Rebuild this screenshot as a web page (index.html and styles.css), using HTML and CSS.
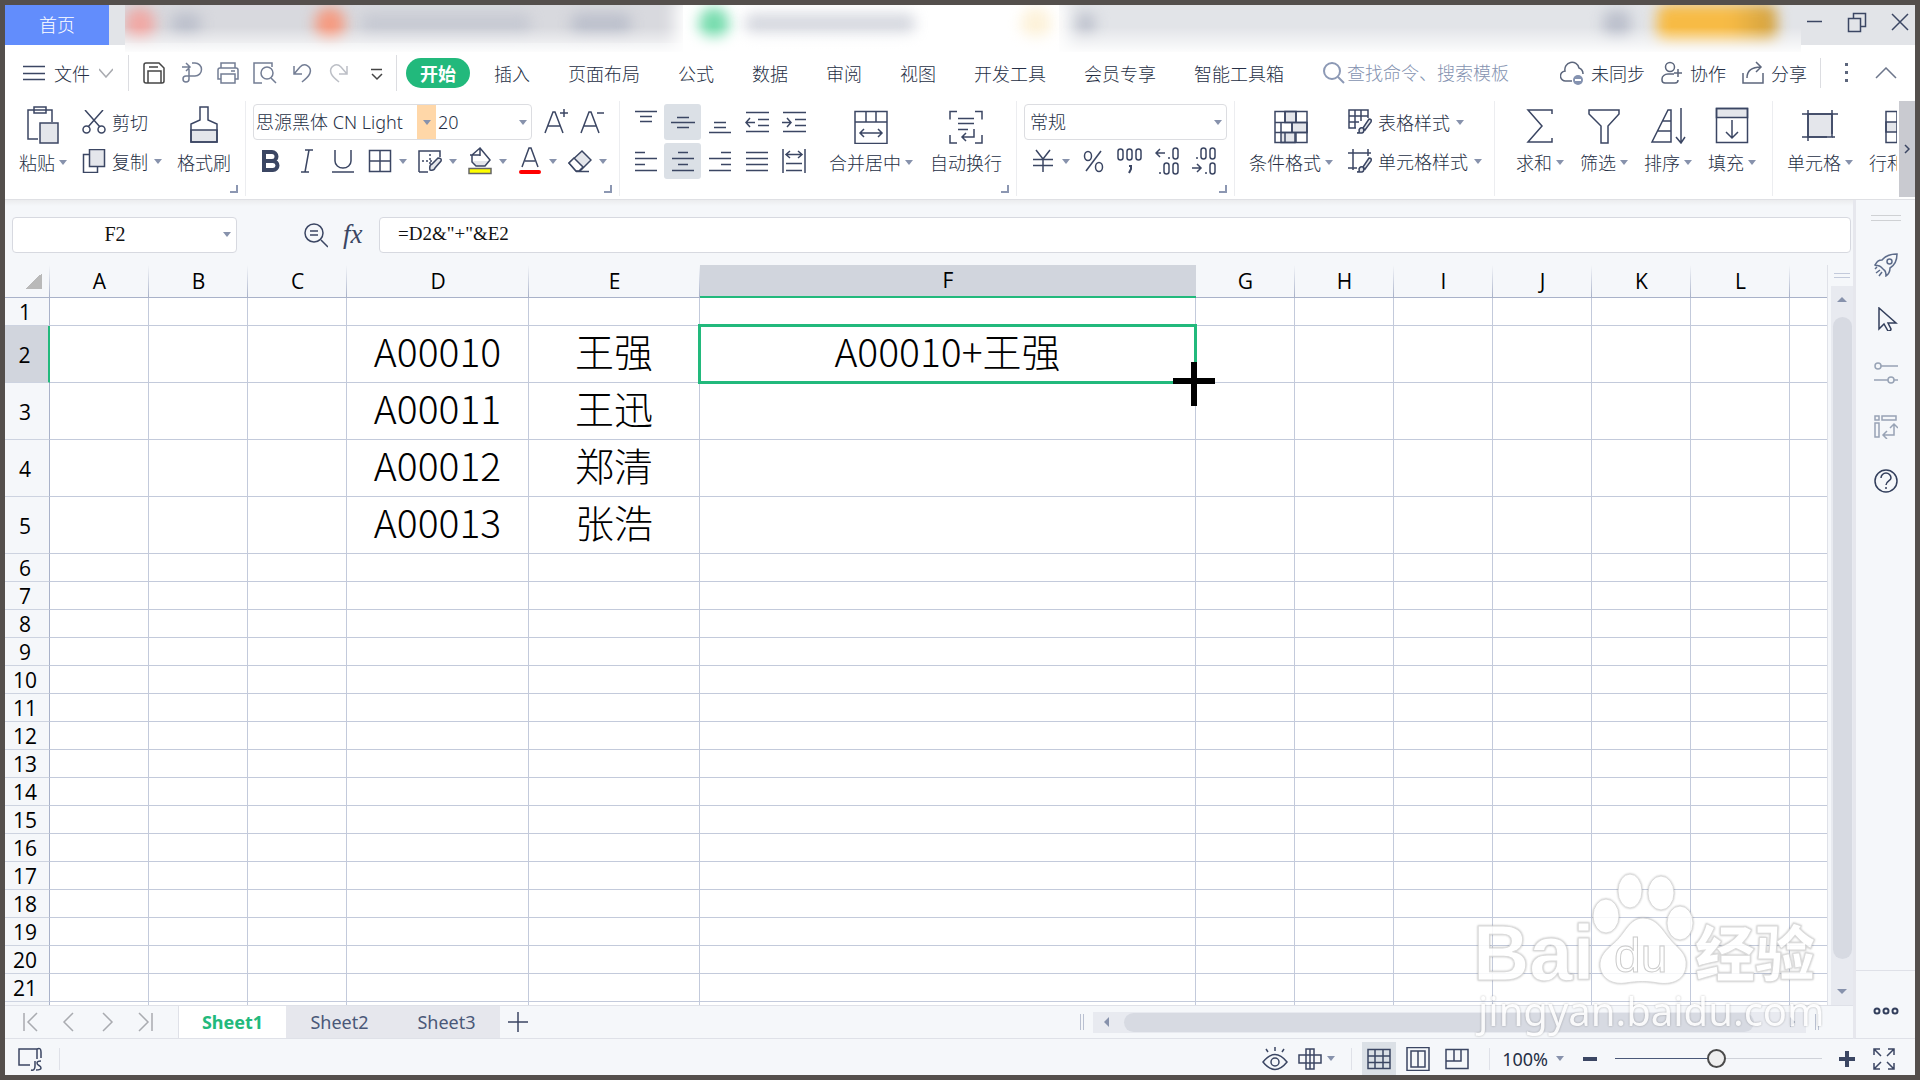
FILE: index.html
```
<!DOCTYPE html>
<html lang="zh-CN">
<head>
    <meta charset="UTF-8">
    <meta name="viewport" content="width=device-width, initial-scale=1.0">
    <title>表格</title>
    <link rel="stylesheet" href="styles.css">
</head>
<body>
    <div class="app">
        <header class="titlebar">
            <button class="home-tab" type="button">首页</button>
            <div class="doc-tabs">
                <div class="doc-tab tab-a"><i class="dot pink"></i><i class="bar short"></i></div>
                <div class="doc-tab tab-b"><i class="dot orange"></i><i class="bar long"></i><i class="bar mid"></i></div>
                <div class="doc-tab tab-c"><i class="dot green"></i><i class="bar long"></i><i class="dot yellow"></i></div>
                <div class="doc-tab tab-d"><i class="bar plus"></i></div>
                <div class="account"><i class="bar badge"></i><i class="pill"></i></div>
            </div>
            <div class="window-buttons">
                <button type="button" aria-label="最小化"><svg class="icon" width="20" height="24" viewBox="0 0 20 24"><path d="M3 11.500h15"/></svg></button>
                <button type="button" aria-label="还原"><svg class="icon" width="20" height="24" viewBox="0 0 20 24"><path d="M1.500 8.500h12v13h-12zM6.500 8.500v-5h12v13h-5"/></svg></button>
                <button type="button" aria-label="关闭"><svg class="icon" width="20" height="24" viewBox="0 0 20 24"><path d="M2 4l16 16M18 4L2 20"/></svg></button>
            </div>
        </header>

        <nav class="menubar">
            <button class="file-menu" type="button">
                <svg class="icon" width="22" height="24" viewBox="0 0 22 24"><path d="M0 5.500h22M0 12.500h22M0 18.500h22"/></svg>
                文件
                <svg class="icon light" width="14" height="10" viewBox="0 0 14 10"><path d="M0 1l7 8 7-8"/></svg>
            </button>
            <div class="quick">
                <button type="button" aria-label="保存"><svg class="icon dark" width="24" height="24" viewBox="0 0 24 24"><path d="M2 4a2 2 0 0 1 2-2h13l5 5v13a2 2 0 0 1-2 2H4a2 2 0 0 1-2-2zM6 22V10h13v12M7 6h9"/></svg></button>
                <button type="button" aria-label="输出"><svg class="icon soft" width="24" height="24" viewBox="0 0 24 24"><path d="M3 6h7M7 2l4 4-4 4M13 2h3a6 6 0 0 1 0 13H7a3 3 0 1 0 3 3V5"/></svg></button>
                <button type="button" aria-label="打印"><svg class="icon soft" width="24" height="24" viewBox="0 0 24 24"><path d="M5 7V2h14v5M5 18H2V9q0-2 2-2h16q2 0 2 2v9h-3M5 13h14v9H5zM15 10h4"/></svg></button>
                <button type="button" aria-label="打印预览"><svg class="icon soft" width="24" height="24" viewBox="0 0 24 24"><path d="M9 22H1V2h18v4M18 17l5 5"/><circle cx="14" cy="12" r="6"/></svg></button>
                <button type="button" aria-label="撤销"><svg class="icon soft" width="24" height="24" viewBox="0 0 24 24"><path d="M4 5v8h8M4 13l6-7c5-5 12 0 10 6-1 4-5 6-8 9"/></svg></button>
                <button type="button" aria-label="恢复"><svg class="icon faint" width="24" height="24" viewBox="0 0 24 24"><path d="M20 5v8h-8M20 13l-6-7C9 1 2 6 4 12c1 4 5 6 8 9"/></svg></button>
                <button type="button" aria-label="更多"><svg class="icon dark" width="24" height="24" viewBox="0 0 24 24"><path d="M7 8.500h11M8 13l5 5 5-5"/></svg></button>
            </div>
            <div class="menus">
                <button class="active" type="button">开始</button>
                <button type="button">插入</button>
                <button type="button">页面布局</button>
                <button type="button">公式</button>
                <button type="button">数据</button>
                <button type="button">审阅</button>
                <button type="button">视图</button>
                <button type="button">开发工具</button>
                <button type="button">会员专享</button>
                <button type="button">智能工具箱</button>
            </div>
            <label class="search">
                <svg class="icon" width="22" height="24" viewBox="0 0 22 24"><circle cx="9" cy="10" r="8"/><path d="M15 16l6 6"/></svg>
                <input type="text" placeholder="查找命令、搜索模板" aria-label="查找命令">
            </label>
            <div class="share">
                <button type="button"><svg class="icon" width="24" height="26" viewBox="0 0 24 26"><path d="M12 21H6a5 5 0 0 1-1-10 7 7 0 0 1 14-3c3 1 4 4 4 6"/><circle cx="18" cy="20" r="5" class="solid"/><path class="cut" d="M15 20h6"/></svg>未同步</button>
                <button type="button"><svg class="icon" width="22" height="24" viewBox="0 0 22 24"><circle cx="9" cy="6" r="4.500"/><path d="M13 13H7a6 5 0 0 0-6 5v1q0 3 3 3h10q3 0 3-3M17 8v8M13 12h8"/></svg>协作</button>
                <button type="button"><svg class="icon" width="22" height="24" viewBox="0 0 22 24"><path d="M1 12v10h20V12M5 17c0-8 5-11 14-11M14 1l5 5-5 5"/></svg>分享</button>
            </div>
            <button class="more" type="button" aria-label="更多选项"><svg class="icon" width="6" height="24" viewBox="0 0 6 24"><path class="fill" d="M1 2h3v3H1zM1 10h3v3H1zM1 18h3v3H1z"/></svg></button>
            <button class="collapse" type="button" aria-label="收起功能区"><svg class="icon" width="22" height="12" viewBox="0 0 22 12"><path d="M1 11L11 1l10 10"/></svg></button>
        </nav>

        <section class="ribbon">
            <div class="groups">
                <div class="group clipboard">
                    <button class="big" type="button"><svg class="icon" width="34" height="40" viewBox="0 0 34 40"><path d="M12 35H2V6h24v12M8 3h12v6H8z"/><path class="tint" d="M14 19h18v20H14z"/></svg><span>粘贴<i class="caret"></i></span></button>
                    <div class="rows">
                        <button class="small" type="button"><svg class="icon" width="24" height="24" viewBox="0 0 24 24"><path d="M3 0l15 17M21 0L6 17"/><circle cx="4.500" cy="19.500" r="3.500"/><circle cx="19.500" cy="19.500" r="3.500"/></svg>剪切</button>
                        <button class="small" type="button"><svg class="icon" width="24" height="24" viewBox="0 0 24 24"><path class="tint" d="M7.500.5h15v17h-15z"/><path d="M7 5.500H1.500v18h14V18"/></svg>复制<i class="caret"></i></button>
                    </div>
                    <button class="big" type="button"><svg class="icon" width="30" height="40" viewBox="0 0 30 40"><path class="tint" d="M2 26h26v12H2z"/><path d="M2 38V20l9-4V3h8v13l9 4v18z"/></svg><span>格式刷</span></button>
                    <i class="corner"></i>
                </div>

                <div class="group font">
                    <div class="rows">
                        <div class="row sizes">
                            <div class="combo">
                                <select class="font-name" aria-label="字体"><option>思源黑体 CN Light</option></select>
                                <select class="font-size" aria-label="字号"><option>20</option></select>
                            </div>
                            <button type="button" aria-label="增大字号"><svg class="icon" width="24" height="28" viewBox="0 0 24 28"><path d="M1 25L9 4h2l8 21M4 18h12M20 1v8M16 5h8"/></svg></button>
                            <button type="button" aria-label="减小字号"><svg class="icon" width="24" height="28" viewBox="0 0 24 28"><path d="M1 25L9 4h2l8 21M4 18h12M17 5h7"/></svg></button>
                        </div>
                        <div class="row">
                            <button class="tool" type="button" aria-label="加粗"><svg class="icon heavy" width="24" height="24" viewBox="0 0 24 24"><path d="M5 3h8a4.500 4.500 0 0 1 0 9H5zM5 12h9a4.500 4.500 0 0 1 0 9H5z"/></svg></button>
                            <button class="tool" type="button" aria-label="倾斜"><svg class="icon" width="24" height="24" viewBox="0 0 24 24"><path d="M10 1h8M6 23h8M14 1l-4 22"/></svg></button>
                            <button class="tool" type="button" aria-label="下划线"><svg class="icon" width="24" height="24" viewBox="0 0 24 24"><path d="M4 1v11a8 7 0 0 0 16 0V1M1 23h22"/></svg></button>
                            <button class="drop" type="button" aria-label="边框"><svg class="icon" width="24" height="24" viewBox="0 0 24 24"><path d="M1.500 1.500h21v21h-21zM12 2v20M2 12h20"/></svg><i class="caret"></i></button>
                            <button class="drop" type="button" aria-label="绘制边框"><svg class="icon" width="24" height="24" viewBox="0 0 24 24"><path d="M1 23V2h21v6M1 23h9M4 12h2m2 0h2m2 0h2M12 5v2m0 2v2m0 2v2"/><path class="tint" d="M12 21q-1-5 2-6l6-6q4 0 3 3l-6 7q-1 3-5 2z"/></svg><i class="caret"></i></button>
                            <button class="drop" type="button" aria-label="填充颜色"><svg class="icon" width="24" height="28" viewBox="0 0 24 28"><path class="tint bare" d="M4 14h17l-4 5H8z"/><path d="M12 1L4 8v7l4 4h9l5-6zM12 1v8M2 8h10"/><path class="yellow-mark" d="M1 21.500h22v5H1z"/></svg><i class="caret"></i></button>
                            <button class="drop" type="button" aria-label="字体颜色"><svg class="icon" width="24" height="28" viewBox="0 0 24 28"><path d="M4 20l7-19h2l7 19M7 14h10"/><path class="red-mark" d="M3 25h18"/></svg><i class="caret"></i></button>
                            <button class="drop" type="button" aria-label="清除"><svg class="icon" width="24" height="24" viewBox="0 0 24 24"><path class="tint" d="M1 14L14 2l9 9-11 11H8z"/><path class="paper" d="M1 14l5-5 9 9-4 4H8z"/><path d="M8 22.500h13"/></svg><i class="caret"></i></button>
                        </div>
                    </div>
                    <i class="corner"></i>
                </div>

                <div class="group align">
                    <div class="rows">
                        <div class="row">
                            <button class="tool" type="button" aria-label="顶端对齐"><svg class="icon" width="24" height="24" viewBox="0 0 24 24"><path d="M1 1.500h22M6 6.500h12M6 11.500h12"/></svg></button>
                            <button class="tool on" type="button" aria-label="垂直居中"><svg class="icon" width="24" height="24" viewBox="0 0 24 24"><path d="M6 7.500h12M0 12.500h24M6 17.500h12"/></svg></button>
                            <button class="tool" type="button" aria-label="底端对齐"><svg class="icon" width="24" height="24" viewBox="0 0 24 24"><path d="M6 12.500h12M6 17.500h12M1 22.500h22"/></svg></button>
                            <button class="tool" type="button" aria-label="减少缩进"><svg class="icon" width="24" height="24" viewBox="0 0 24 24"><path d="M1 2.500h23M13 9.500h11M13 15.500h11M1 21.500h23M1 12.500h9M5 8l-4 4.500L5 17"/></svg></button>
                            <button class="tool" type="button" aria-label="增加缩进"><svg class="icon" width="24" height="24" viewBox="0 0 24 24"><path d="M1 2.500h23M13 9.500h11M13 15.500h11M1 21.500h23M0 12.500h9M5 8l4 4.500L5 17"/></svg></button>
                        </div>
                        <div class="row">
                            <button class="tool" type="button" aria-label="左对齐"><svg class="icon" width="24" height="24" viewBox="0 0 24 24"><path d="M1 3.500h10M1 9.500h22M1 15.500h10M1 21.500h22"/></svg></button>
                            <button class="tool on" type="button" aria-label="水平居中"><svg class="icon" width="24" height="24" viewBox="0 0 24 24"><path d="M7 3.500h10M1 9.500h22M7 15.500h10M1 21.500h22"/></svg></button>
                            <button class="tool" type="button" aria-label="右对齐"><svg class="icon" width="24" height="24" viewBox="0 0 24 24"><path d="M13 3.500h10M1 9.500h22M13 15.500h10M1 21.500h22"/></svg></button>
                            <button class="tool" type="button" aria-label="两端对齐"><svg class="icon" width="24" height="24" viewBox="0 0 24 24"><path d="M1 3.500h22M1 9.500h22M1 15.500h22M1 21.500h22"/></svg></button>
                            <button class="tool" type="button" aria-label="分散对齐"><svg class="icon" width="24" height="24" viewBox="0 0 24 24"><path d="M1 0v24M23 0v24M4 5.500h16M8 2L4 5.500 8 9M16 2l4 3.500L16 9M4 14.500h16M4 21.500h16"/></svg></button>
                        </div>
                    </div>
                    <button class="big" type="button"><svg class="icon" width="34" height="40" viewBox="0 0 34 40"><path d="M1 7.500h32v32H1zM1 18h32M12 8v10M22 8v10M6 29h22M10 25l-4 4 4 4M24 25l4 4-4 4"/></svg><span>合并居中<i class="caret"></i></span></button>
                    <button class="big" type="button"><svg class="icon" width="34" height="40" viewBox="0 0 34 40"><path d="M8 7.500H1v8M26 7.500h7v8M8 39H1v-8M26 39h7v-8M9 14.500h16M9 19.500h16M9 25.500h10M25 25v8H13M17 29l-4 4 4 4"/></svg><span>自动换行</span></button>
                    <i class="corner"></i>
                </div>

                <div class="group number">
                    <div class="rows">
                        <select class="format" aria-label="数字格式"><option>常规</option></select>
                        <div class="row">
                            <button class="drop" type="button" aria-label="货币"><svg class="icon" width="24" height="24" viewBox="0 0 24 24"><path d="M5 1l7 9 7-9M2 10.500h20M2 16.500h20M12 10v13"/></svg><i class="caret"></i></button>
                            <button class="tool" type="button" aria-label="百分比"><svg class="icon" width="24" height="24" viewBox="0 0 24 24"><path d="M20 2L5 22"/><ellipse cx="7" cy="7" rx="3.500" ry="4.500"/><ellipse cx="18" cy="18" rx="3.500" ry="4.500"/></svg></button>
                            <button class="tool" type="button" aria-label="千位分隔"><svg class="icon" width="26" height="26" viewBox="0 0 26 26"><rect x="1" y="1" width="5" height="11" rx="2.500"/><rect x="10" y="1" width="5" height="11" rx="2.500"/><rect x="19" y="1" width="5" height="11" rx="2.500"/><path class="bold" d="M12 18h2v3l-2 4"/></svg></button>
                            <button class="tool" type="button" aria-label="增加小数位"><svg class="icon" width="24" height="28" viewBox="0 0 24 28"><path d="M1 6h9M5 2L1 6l4 4M13 11h2M4 26h2"/><rect x="18" y="1" width="5" height="11" rx="2.500"/><rect x="9" y="16" width="5" height="11" rx="2.500"/><rect x="18" y="16" width="5" height="11" rx="2.500"/></svg></button>
                            <button class="tool" type="button" aria-label="减少小数位"><svg class="icon" width="24" height="28" viewBox="0 0 24 28"><path d="M4 11h2M0 21h9M5 17l4 4-4 4M13 26h2"/><rect x="9" y="1" width="5" height="11" rx="2.500"/><rect x="18" y="1" width="5" height="11" rx="2.500"/><rect x="18" y="16" width="5" height="11" rx="2.500"/></svg></button>
                        </div>
                    </div>
                    <i class="corner"></i>
                </div>

                <div class="group styles">
                    <button class="big" type="button"><svg class="icon" width="34" height="40" viewBox="0 0 34 40"><path class="tint" d="M11 7.500h11v11H11zM18 18.500h15v10H18zM7 28.500h14v10H7z"/><path d="M1 7.500h32v31H1zM1 18.500h32M1 28.500h32M11 8v10M22 8v10M7 19v9M18 19v9M11 29v9M22 29v9"/></svg><span>条件格式<i class="caret"></i></span></button>
                    <div class="rows">
                        <button class="small" type="button"><svg class="icon" width="24" height="26" viewBox="0 0 24 26"><path d="M8 19H1V1h19v8M1 7h19M1 13h10M7 1v18M13 1v11"/><path class="tint" d="M9 24q3 0 2-3 1-3 4-2 2 4-1 5zM15 19l6-9q3 0 2 3l-6 8z"/></svg>表格样式<i class="caret"></i></button>
                        <button class="small" type="button"><svg class="icon" width="24" height="26" viewBox="0 0 24 26"><path d="M0 5h23M5 1v21M0 20h9M20 1v7"/><path class="tint" d="M9 24q3 0 2-3 1-3 4-2 2 4-1 5zM15 19l6-9q3 0 2 3l-6 8z"/></svg>单元格样式<i class="caret"></i></button>
                    </div>
                </div>

                <div class="group edit">
                    <button class="big" type="button"><svg class="icon" width="34" height="40" viewBox="0 0 34 40"><path d="M29 10V6H5l14 16L5 38h24v-4"/></svg><span>求和<i class="caret"></i></span></button>
                    <button class="big" type="button"><svg class="icon" width="34" height="40" viewBox="0 0 34 40"><path d="M2 6h30v4L21 22v17h-7V22L2 10z"/></svg><span>筛选<i class="caret"></i></span></button>
                    <button class="big" type="button"><svg class="icon" width="36" height="40" viewBox="0 0 36 40"><path d="M21 6v32H2L18 6zM13 17h8M8 27h13M31 4v35M26 33l5 6 4-6"/></svg><span>排序<i class="caret"></i></span></button>
                    <button class="big" type="button"><svg class="icon" width="34" height="40" viewBox="0 0 34 40"><path class="tint" d="M1.500 4.500h31v9h-31z"/><path d="M1.500 4.500h31v34h-31zM17 16v18M11 28l6 6 6-6"/></svg><span>填充<i class="caret"></i></span></button>
                </div>

                <div class="group cells">
                    <button class="big" type="button"><svg class="icon" width="36" height="40" viewBox="0 0 36 40"><path class="tint" d="M6 10h24v23H6z"/><path d="M0 10h36M0 33h25M6 6v31M30 6v24M30 33h3"/></svg><span>单元格<i class="caret"></i></span></button>
                    <button class="big" type="button"><svg class="icon" width="34" height="40" viewBox="0 0 34 40"><path class="tint" d="M1 18h32v10H1z"/><path d="M1 7.500h32v31H1zM12 8v30"/></svg><span>行和列<i class="caret"></i></span></button>
                </div>
            </div>
            <button class="scroll-right" type="button" aria-label="向右滚动"><svg class="icon" width="6" height="10" viewBox="0 0 6 10"><path d="M1 1l4 4-4 4"/></svg></button>
        </section>

        <div class="workspace">
            <main class="main">
                <div class="formula-bar">
                    <div class="name-box"><input type="text" value="F2" aria-label="名称框"><i class="caret"></i></div>
                    <button class="lookup" type="button" aria-label="查找"><svg class="icon" width="24" height="26" viewBox="0 0 24 26"><circle cx="10" cy="11" r="9"/><path d="M17 18l7 7M6 9h8M6 13h8"/></svg></button>
                    <button class="fx" type="button" aria-label="插入函数">fx</button>
                    <input class="formula" type="text" value='=D2&amp;"+"&amp;E2' aria-label="公式">
                </div>
                <div class="sheet-area">
                    <div class="sheet">
                        <table>
                            <colgroup>
                                <col class="col-head"><col><col><col><col class="col-d"><col class="col-e"><col class="col-f"><col><col><col><col><col><col><col>
                            </colgroup>
                            <thead>
                                <tr><th class="select-all"></th><th>A</th><th>B</th><th>C</th><th>D</th><th>E</th><th class="current">F</th><th>G</th><th>H</th><th>I</th><th>J</th><th>K</th><th>L</th><th></th></tr>
                            </thead>
                            <tbody id="rows"></tbody>
                        </table>
                    </div>
                    <div class="vscroll">
                        <i class="split"></i>
                        <div class="vtrack"><i class="tri up"></i><i class="vthumb"></i><i class="tri down"></i></div>
                    </div>
                </div>
                <div class="sheet-tabs">
                    <div class="sheet-nav">
                        <button type="button" aria-label="第一张"><svg class="icon light" width="16" height="20" viewBox="0 0 16 20"><path d="M1 1v18M14 1L5 10l9 9"/></svg></button>
                        <button type="button" aria-label="上一张"><svg class="icon light" width="16" height="20" viewBox="0 0 16 20"><path d="M12 1l-9 9 9 9"/></svg></button>
                        <button type="button" aria-label="下一张"><svg class="icon light" width="16" height="20" viewBox="0 0 16 20"><path d="M4 1l9 9-9 9"/></svg></button>
                        <button type="button" aria-label="最后一张"><svg class="icon light" width="16" height="20" viewBox="0 0 16 20"><path d="M2 1l9 9-9 9M15 1v18"/></svg></button>
                    </div>
                    <button class="sheet-tab active" type="button">Sheet1</button>
                    <button class="sheet-tab" type="button">Sheet2</button>
                    <button class="sheet-tab" type="button">Sheet3</button>
                    <button class="add-sheet" type="button" aria-label="新建工作表"><svg class="icon" width="20" height="20" viewBox="0 0 20 20"><path d="M10 0v20M0 10h20"/></svg></button>
                    <div class="hscroll">
                        <i class="grip"></i>
                        <div class="htrack"><i class="tri left"></i><i class="hthumb"></i><i class="tri right"></i></div>
                        <i class="grip"></i>
                    </div>
                </div>
            </main>
            <aside class="side">
                <i class="handle"></i>
                <button type="button" aria-label="快捷"><svg class="icon" width="24" height="24" viewBox="0 0 24 24"><path d="M8 7c4-5 9-6 15-6 0 6-2 11-7 14 0 4-1 6-4 8 0-3 0-5-2-6l-3-3c-2-2-4-1-6-2 2-3 3-5 7-5zM2 20l4-3M5 23l3-4M1 16l2-2"/><circle cx="15.500" cy="8.500" r="2.500"/></svg></button>
                <button type="button" aria-label="选择"><svg class="icon dark-blue" width="24" height="24" viewBox="0 0 24 24"><path d="M5 1v21l5-5 4 7q3 0 3-2l-3-6h8z"/></svg></button>
                <button class="dim" type="button" aria-label="属性"><svg class="icon" width="24" height="24" viewBox="0 0 24 24"><circle cx="4" cy="5" r="3"/><path d="M7 5h17M0 19h14M20 19h4"/><circle cx="17" cy="19" r="3"/></svg></button>
                <button class="dim" type="button" aria-label="转置"><svg class="icon" width="24" height="24" viewBox="0 0 24 24"><path d="M1 1h4v4H1zM8 1h14v4H8zM1 8h4v14H1zM20 10v10H10M16 13l4-4 4 4M13 16l-4 4 4 4"/></svg></button>
                <button type="button" aria-label="帮助"><svg class="icon dark-blue" width="24" height="24" viewBox="0 0 24 24"><circle cx="12" cy="12" r="11"/><path d="M7 9a5 5 0 0 1 10 0c0 3-5 3-5 7M12 18v2"/></svg></button>
                <div class="side-more"><button type="button" aria-label="更多"><svg class="icon bold" width="26" height="8" viewBox="0 0 26 8"><circle cx="4" cy="4" r="2.500"/><circle cx="13" cy="4" r="2.500"/><circle cx="22" cy="4" r="2.500"/></svg></button></div>
            </aside>
        </div>

        <footer class="status">
            <button class="macro" type="button" aria-label="JS宏"><svg class="icon" width="26" height="24" viewBox="0 0 26 24"><path d="M13 18H2V2h18v10M20 2q4-2 4 3v6M14 23q4 1 4-4v-5M24 14q-4 0-4 2c0 3 4 2 4 5q0 2-5 2"/></svg></button>
            <div class="views">
                <button class="eye" type="button" aria-label="护眼模式"><svg class="icon" width="26" height="24" viewBox="0 0 26 24"><path d="M1 15q12-15 24 0-12 15-24 0zM13 4V0M6 5L4 2M20 5l2-3"/><circle cx="13" cy="15" r="4"/></svg></button>
                <button class="reading" type="button" aria-label="阅读模式"><svg class="icon" width="24" height="24" viewBox="0 0 24 24"><path d="M8 2h8v20H8zM1 8h22v8H1zM12 2v20"/></svg><i class="caret"></i></button>
                <button class="view on first" type="button" aria-label="普通视图"><svg class="icon" width="24" height="24" viewBox="0 0 24 24"><path d="M1 2.500h22v19H1zM8 3v19M16 3v19M1 9h22M1 15.500h22"/></svg></button>
                <button class="view" type="button" aria-label="页面布局视图"><svg class="icon" width="24" height="24" viewBox="0 0 24 24"><path d="M1 .5h22v23H1zM5 4h14v16H5zM12 4v16"/></svg></button>
                <button class="view" type="button" aria-label="分页预览"><svg class="icon" width="24" height="24" viewBox="0 0 24 24"><path d="M1 2.500h22v19H1zM1 14h15V3M9 3v11"/></svg></button>
            </div>
            <div class="zoom">
                <button class="percent" type="button">100%<i class="caret"></i></button>
                <button type="button" aria-label="缩小"><svg class="icon heavy" width="16" height="16" viewBox="0 0 16 16"><path d="M1 8h14"/></svg></button>
                <input type="range" min="0" max="100" value="49" aria-label="缩放">
                <button type="button" aria-label="放大"><svg class="icon heavy" width="16" height="16" viewBox="0 0 16 16"><path d="M0 8h16M8 0v16"/></svg></button>
                <button class="full" type="button" aria-label="全屏"><svg class="icon" width="22" height="22" viewBox="0 0 22 22"><path d="M1 7V1h6M1 1l7 7M15 1h6v6M21 1l-7 7M1 15v6h6M1 21l7-7M21 15v6h-6M21 21l-7-7"/></svg></button>
            </div>
        </footer>

        <svg class="watermark" width="360" height="180" viewBox="0 0 360 180">
            <text class="latin" x="2" y="112">Bai</text>
            <ellipse cx="135" cy="48" rx="13" ry="17"/>
            <ellipse cx="159" cy="23" rx="12" ry="17"/>
            <ellipse cx="190" cy="25" rx="13" ry="17"/>
            <ellipse cx="209" cy="55" rx="13" ry="17"/>
            <path d="M172 50c-14 0-18 16-29 25-8 7-15 13-14 24 2 13 14 18 26 16 12-2 21-2 32 0 13 2 26-2 28-16 2-14-9-19-16-28-7-8-13-21-27-21z"/>
            <text class="du" x="143" y="104">du</text>
            <text class="hanzi" x="224" y="108">经验</text>
            <text class="site" x="7" y="158">jingyan.baidu.com</text>
        </svg>
    </div>
    <script src="sheet.js"></script>
</body>
</html>
```

FILE: styles.css
```
* {
    box-sizing: border-box;
}

body {
    margin: 0;
    font-family: "Noto Sans", "Noto Sans CJK SC", sans-serif;
    font-size: 18px;
    font-weight: 300;
    color: #262f45;
}

button, input, select {
    font: inherit;
    color: inherit;
    margin: 0;
    padding: 0;
    border: 0;
    background: none;
    outline: none;
}

button {
    display: flex;
    align-items: center;
    white-space: nowrap;
}

select {
    appearance: none;
}

.app {
    position: relative;
    display: flex;
    flex-direction: column;
    height: 100vh;
    border: 5px solid #544f4c;
    background: #fff;
    overflow: hidden;
}

.icon {
    flex: none;
    fill: none;
    stroke: #3b4663;
    stroke-width: 1.5;
}

.icon.dark { stroke: #454545; }
.icon.soft { stroke: #737d94; }
.icon.faint { stroke: #bcbfc6; }
.icon.light { stroke: #a9abb0; }
.bold { stroke-width: 2; }
.icon.heavy { stroke-width: 4; }
.tint { fill: #e4e6eb; }
.bare { stroke: none; }
.paper { fill: #fff; }
.solid { fill: #8492b0; stroke: none; }
.cut { stroke: #fff; stroke-width: 2; }
.fill { fill: #5c667c; stroke: none; }
.yellow-mark { fill: #ff0; stroke: #666; }
.red-mark { stroke: #f00; stroke-width: 4; stroke-linecap: round; }

.caret {
    flex: none;
    display: inline-block;
    border: 4px solid transparent;
    border-top: 5px solid #8792ac;
    border-bottom: 0;
}

/* title bar */
.titlebar {
    display: flex;
    height: 40px;
    flex: none;
    background: #e2e4e8;
}

.home-tab {
    width: 104px;
    justify-content: center;
    padding-bottom: 2px;
    background: #628dfc;
    color: #fff;
    margin-right: 16px;
}

.doc-tabs {
    position: relative;
    z-index: 1;
    display: flex;
    flex: 1;
    height: 47px;
    background: #e2e4e8;
    overflow: hidden;
}

.doc-tabs::after {
    content: "";
    position: absolute;
    inset: 22px 0 0;
    background: linear-gradient(rgba(255, 255, 255, 0), rgba(255, 255, 255, 0.9));
}

.doc-tab, .account {
    display: flex;
    align-items: center;
    gap: 16px;
    height: 38px;
    background: #d8d9de;
}

.doc-tab i, .account i {
    flex: none;
    filter: blur(7px);
}

.tab-a { width: 190px; }
.tab-b { width: 368px; }
.tab-c { width: 376px; height: 47px; padding: 0 8px 9px 16px; background: #fff; box-shadow: 0 0 16px 8px #fff; }
.tab-d { width: 60px; padding-left: 18px; background: none; }
.account { margin-left: auto; padding-right: 24px; gap: 26px; background: none; }
.dot { width: 30px; height: 34px; border-radius: 15px; }
.pink { background: #f0a8a4; }
.orange { background: #f59a80; }
.green { background: #77dcae; }
.yellow { background: #fdf2da; margin-left: auto; }
.bar { height: 22px; border-radius: 8px; background: #bcc0cc; }
.short { width: 30px; }
.long { width: 170px; opacity: 0.6; }
.mid { width: 60px; margin-left: 24px; }
.plus { width: 18px; }
.badge { width: 28px; height: 28px; }
.pill { width: 120px; height: 40px; border-radius: 10px; background: linear-gradient(90deg, #f7bb45 60%, #d0a040); }

.window-buttons {
    display: flex;
    align-items: center;
    justify-content: space-between;
    width: 114px;
    padding: 0 5px 6px 3px;
}

/* menu bar */
.menubar {
    display: flex;
    align-items: center;
    height: 56px;
    flex: none;
}

.file-menu {
    gap: 9px;
    height: 36px;
    padding: 0 15px 0 18px;
    border-right: 1px solid #dcdde1;
}

.quick {
    display: flex;
    align-items: center;
    height: 36px;
    gap: 13px;
    padding: 0 8px 0 13px;
    border-right: 1px solid #dcdde1;
}

.menus {
    display: flex;
    align-items: center;
    gap: 38px;
    padding-left: 9px;
}

.menus .active {
    height: 30px;
    padding: 0 14px;
    margin-right: -14px;
    border-radius: 15px;
    background: #22b97c;
    color: #fff;
    font-weight: 700;
}

.search {
    display: flex;
    align-items: center;
    gap: 2px;
    flex: 1;
    padding-left: 39px;
}

.search .icon { stroke: #8c99b5; stroke-width: 2; }

.search input {
    width: 100%;
    min-width: 170px;
}

.search input::placeholder {
    color: #8492b0;
    opacity: 1;
}

.share {
    display: flex;
    align-items: center;
    gap: 16px;
    height: 30px;
    padding-right: 13px;
    border-right: 1px solid #dcdde1;
}

.share button { gap: 7px; }
.share .icon { stroke: #5c667c; }
.more { padding: 0 25px 0 23px; }
.collapse { padding-right: 18px; }
.collapse .icon { stroke: #6d768b; }

/* ribbon */
.ribbon {
    display: flex;
    align-items: flex-start;
    flex: none;
    height: 99px;
    border-bottom: 1px solid #dfe0e4;
}

.groups {
    display: flex;
    flex: 1;
    min-width: 0;
    margin-right: 2px;
    overflow: hidden;
}

.group {
    position: relative;
    display: flex;
    flex: none;
    height: 95px;
    padding-top: 3px;
    border-right: 1px solid #ecedf0;
}

.clipboard { gap: 15px; padding-left: 14px; padding-right: 14px; }
.font { padding-left: 7px; padding-right: 8px; }
.align { gap: 17px; padding-left: 7px; padding-right: 14px; }
.number { padding-left: 7px; padding-right: 7px; }
.styles { gap: 15px; padding-left: 14px; padding-right: 12px; }
.edit { gap: 16px; padding-left: 21px; padding-right: 16px; }
.cells { gap: 16px; padding-left: 14px; border-right: 0; }

.corner {
    position: absolute;
    right: 7px;
    bottom: 3px;
    width: 8px;
    height: 8px;
    border: solid #8c97b2;
    border-width: 0 2px 2px 0;
}

.big {
    flex-direction: column;
    height: 78px;
}

.big span {
    display: flex;
    gap: 4px;
    align-items: center;
    height: 36px;
}

.rows {
    display: flex;
    flex-direction: column;
    gap: 3px;
}

.row { display: flex; height: 36px; }

.small {
    height: 36px;
    gap: 6px;
}

.sizes { gap: 12px; }

.combo {
    display: flex;
    width: 279px;
    height: 36px;
    border: 1px solid #dcdde1;
    border-radius: 4px;
    background: #fff;
}

.combo select, .format {
    background: url("data:image/svg+xml,%3Csvg xmlns='http://www.w3.org/2000/svg' width='8' height='5'%3E%3Cpath fill='%238792ac' d='M0 0h8L4 5z'/%3E%3C/svg%3E") no-repeat right 4px center;
}

.font-name {
    width: 182px;
    padding-left: 2px;
}

.combo .font-name {
    background-image: url("data:image/svg+xml,%3Csvg xmlns='http://www.w3.org/2000/svg' width='19' height='34'%3E%3Cpath fill='%23ffd7a8' d='M0 0h19v34H0z'/%3E%3Cpath fill='%238792ac' d='M6 15h8l-4 5z'/%3E%3C/svg%3E");
    background-position: right center;
}

.font-size {
    flex: 1;
    padding-left: 2px;
}

.format {
    width: 203px;
    height: 36px;
    padding-left: 5px;
    border: 1px solid #dcdde1;
    border-radius: 4px;
}

.tool {
    width: 36px;
    justify-content: center;
    border-radius: 3px;
}

.align .tool, .number .tool { width: 37px; }
.on { background: #dbe0e6; }

.drop {
    width: 50px;
    gap: 7px;
    padding-left: 7px;
}

.scroll-right {
    width: 16px;
    height: 96px;
    justify-content: center;
    background: #c9cad0;
}

/* workspace */
.workspace {
    display: flex;
    flex: 1;
    min-height: 0;
    background: #f5f7fa;
}

.main {
    display: flex;
    flex-direction: column;
    flex: 1;
    min-width: 0;
}

.formula-bar {
    display: flex;
    align-items: center;
    flex: none;
    height: 65px;
    padding: 4px 2px 0 7px;
    background: linear-gradient(#ebecee, #f5f7fa 6px);
    font-family: "Liberation Serif", serif;
    font-size: 20px;
    font-weight: 400;
    color: #111;
}

.name-box {
    display: flex;
    align-items: center;
    width: 225px;
    height: 36px;
    padding-right: 5px;
    border: 1px solid #d7d9e0;
    border-radius: 4px;
    background: #fff;
}

.name-box input {
    flex: 1;
    min-width: 0;
    padding-right: 6px;
    text-align: center;
}

.lookup { margin-left: 67px; }

.fx {
    width: 24px;
    margin: 0 12px 0 15px;
    font-size: 27px;
    font-style: italic;
    color: #3b4663;
}

.formula {
    flex: 1;
    min-width: 0;
    height: 36px;
    padding: 0 18px 2px;
    border: 1px solid #d7d9e0;
    border-radius: 4px;
    background: #fff;
    font-size: 19px;
}

.sheet-area {
    display: flex;
    flex: 1;
    min-height: 0;
}

.sheet {
    flex: 1;
    min-width: 0;
    overflow: hidden;
    background: #fff;
    border-right: 1px solid #dfe1e8;
}

table {
    width: 0;
    table-layout: fixed;
    border-spacing: 0;
    color: #000;
}

col { width: 99px; }
.col-head { width: 45px; }
.col-d { width: 182px; }
.col-e { width: 171px; }
.col-f { width: 496px; }

th, td {
    height: 28px;
    padding: 0;
    line-height: 1;
    text-align: center;
    vertical-align: middle;
    border-bottom: 1px solid #c3cadb;
}

td { border-right: 1px solid #c3cadb; }

th {
    font-family: "Open Sans", sans-serif;
    font-size: 21px;
    font-weight: 400;
}

thead th {
    height: 33px;
    border-bottom-color: #a9b2c9;
    background: linear-gradient(#f5f7fa, #a9b2c9) right / 1px 100% no-repeat #f5f7fa;
}

tbody th {
    padding: 2px 4px 0 0;
    border-right: 1px solid #a9b2c9;
    border-bottom-color: #cdd3e0;
    background: #f5f7fa;
}

thead .current {
    background: #d1d5dd;
    border-bottom: 2px solid #22b97c;
}

tbody .current {
    background: #d1d5dd;
    border-right: 2px solid #22b97c;
}

.select-all::after {
    content: "";
    display: block;
    width: 16px;
    height: 16px;
    margin-left: 21px;
    background: linear-gradient(135deg, transparent 50%, #b9b9b9 50%);
}

.tall td, .tall th { height: 57px; }

.tall td {
    padding-bottom: 8px;
    font-family: "Noto Sans CJK SC", sans-serif;
    font-size: 39px;
    font-weight: 300;
}

.selected { position: relative; }

.selected::after {
    content: "";
    position: absolute;
    inset: -2px;
    border: 3px solid #22b97c;
}

.crosshair {
    position: absolute;
    z-index: 1;
    right: -20px;
    bottom: -24px;
}

.vscroll {
    display: flex;
    flex-direction: column;
    width: 25px;
    padding-left: 3px;
}

.split {
    width: 16px;
    height: 5px;
    margin: 8px 3px;
    border: solid #c3cadb;
    border-width: 1px 0;
}

.vtrack {
    display: flex;
    flex-direction: column;
    align-items: center;
    flex: 1;
    padding: 11px 0;
    background: #e8eaf0;
}

.vthumb {
    width: 19px;
    flex: 1;
    margin: 15px 0 30px;
    border-radius: 10px;
    background: #d7dae2;
}

.tri { border: 5px solid transparent; }
.up { border-top: 0; border-bottom-color: #8792ac; }
.down { border-bottom: 0; border-top-color: #8792ac; }
.left { border-left: 0; border-right-color: #8792ac; }
.right { border-right: 0; border-left-color: #8792ac; }

.sheet-tabs {
    display: flex;
    align-items: stretch;
    flex: none;
    height: 34px;
    border: solid #dfe1e8;
    border-width: 1px 0;
}

.sheet-nav {
    display: flex;
    gap: 22px;
    padding: 0 25px 0 18px;
    border-right: 1px solid #dfe1e8;
}

.sheet-tab {
    width: 107px;
    justify-content: center;
    background: #e6e7ed;
    color: #4a5878;
    font-weight: 400;
}

.sheet-tab.active {
    background: #fff;
    color: #22b97c;
    font-weight: 700;
}

.add-sheet { padding-left: 8px; }

.hscroll {
    display: flex;
    align-items: center;
    width: 739px;
    margin-left: auto;
    margin-right: 34px;
    gap: 9px;
}

.grip {
    width: 4px;
    height: 16px;
    border: solid #b9c0d1;
    border-width: 0 1px;
}

.htrack {
    display: flex;
    align-items: center;
    flex: 1;
    height: 21px;
    padding: 0 11px;
    background: #e8eaf0;
}

.hthumb {
    flex: 1;
    height: 19px;
    margin: 0 36px 0 15px;
    border-radius: 10px;
    background: #d7dae2;
}

/* side panel */
.side {
    display: flex;
    flex-direction: column;
    align-items: center;
    gap: 30px;
    width: 62px;
    border-left: 3px solid #e6e7ed;
    border-bottom: 1px solid #dfe1e8;
    padding-top: 15px;
}

.handle {
    width: 30px;
    height: 6px;
    margin-bottom: 2px;
    border: solid #cfd1d4;
    border-width: 1px 0;
}

.side .icon { stroke: #5c6b8a; }
.side .dim .icon { stroke: #98a3b5; }
.side .dark-blue, .side .bold { stroke: #333f5c; }

.side-more {
    display: flex;
    justify-content: center;
    align-self: stretch;
    height: 68px;
    margin-top: auto;
    border-top: 1px solid #dfe1e8;
}

.side-more button { height: 80px; }

/* status bar */
.status {
    display: flex;
    align-items: center;
    flex: none;
    height: 36px;
    padding-top: 3px;
    background: #f5f7fa;
}

.macro {
    height: 22px;
    padding: 0 16px 0 12px;
    border-right: 1px solid #dfe1e8;
}

.views {
    display: flex;
    align-items: center;
    height: 33px;
    margin-left: auto;
}

.reading {
    height: 22px;
    gap: 5px;
    margin-left: 10px;
    padding-right: 16px;
    border-right: 1px solid #dfe1e8;
}

.view {
    width: 34px;
    height: 33px;
    margin-right: 5px;
    justify-content: center;
}

.view.first { margin-left: 10px; }

.zoom {
    display: flex;
    align-items: center;
    height: 22px;
    margin-left: 10px;
    padding: 0 20px 0 12px;
    border-left: 1px solid #dfe1e8;
}

.percent {
    gap: 8px;
    margin-right: 18px;
    font-weight: 400;
}

.zoom input {
    appearance: none;
    width: 207px;
    height: 20px;
    margin: 0 17px;
    background: linear-gradient(90deg, #4a5878 49%, #cfd2d9 49%) center / 100% 1px no-repeat;
}

.zoom input::-webkit-slider-thumb {
    appearance: none;
    width: 19px;
    height: 19px;
    border: 2px solid #4a4a4a;
    border-radius: 50%;
    background: #eee;
}

.full { margin-left: 18px; }

/* watermark */
.watermark {
    position: absolute;
    right: 84px;
    bottom: 27px;
    pointer-events: none;
    fill: #fff;
    stroke: #d4d4d4;
    stroke-width: 1;
    opacity: 0.85;
    filter: drop-shadow(0 0 1px rgba(0, 0, 0, 0.3));
}

.latin {
    font-family: "Liberation Sans", sans-serif;
    font-weight: 700;
    font-size: 78px;
}

.du {
    font-family: "Liberation Sans", sans-serif;
    font-weight: 400;
    font-size: 48px;
    stroke: #c4c4c4;
}

.hanzi {
    font-family: "Noto Sans CJK SC", sans-serif;
    font-weight: 900;
    font-size: 60px;
}

.site {
    font-size: 40px;
    font-weight: 400;
    stroke: none;
}
```

FILE: sheet.js
```
const cells = {
    D2: 'A00010', E2: '王强', F2: 'A00010+王强',
    D3: 'A00011', E3: '王迅',
    D4: 'A00012', E4: '郑清',
    D5: 'A00013', E5: '张浩'
};
const columns = 'ABCDEFGHIJKLM'.split('');
const body = document.getElementById('rows');

for (let r = 1; r <= 22; r++) {
    const tr = document.createElement('tr');
    if (r >= 2 && r <= 5) {
        tr.className = 'tall';
    }
    const th = document.createElement('th');
    // row 22 is only a sliver above the sheet tabs
    th.textContent = r < 22 ? r : '';
    if (r === 2) {
        th.className = 'current';
    }
    tr.appendChild(th);
    columns.forEach(c => {
        const td = document.createElement('td');
        td.textContent = cells[c + r] || '';
        if (c + r === 'F2') {
            td.className = 'selected';
            // fill handle pointer
            td.insertAdjacentHTML('beforeend', '<svg class="crosshair" width="42" height="44" viewBox="0 0 42 44"><path d="M18 0h6v16h18v6H24v22h-6V22H0v-6h18z"/></svg>');
        }
        tr.appendChild(td);
    });
    body.appendChild(tr);
}
```
